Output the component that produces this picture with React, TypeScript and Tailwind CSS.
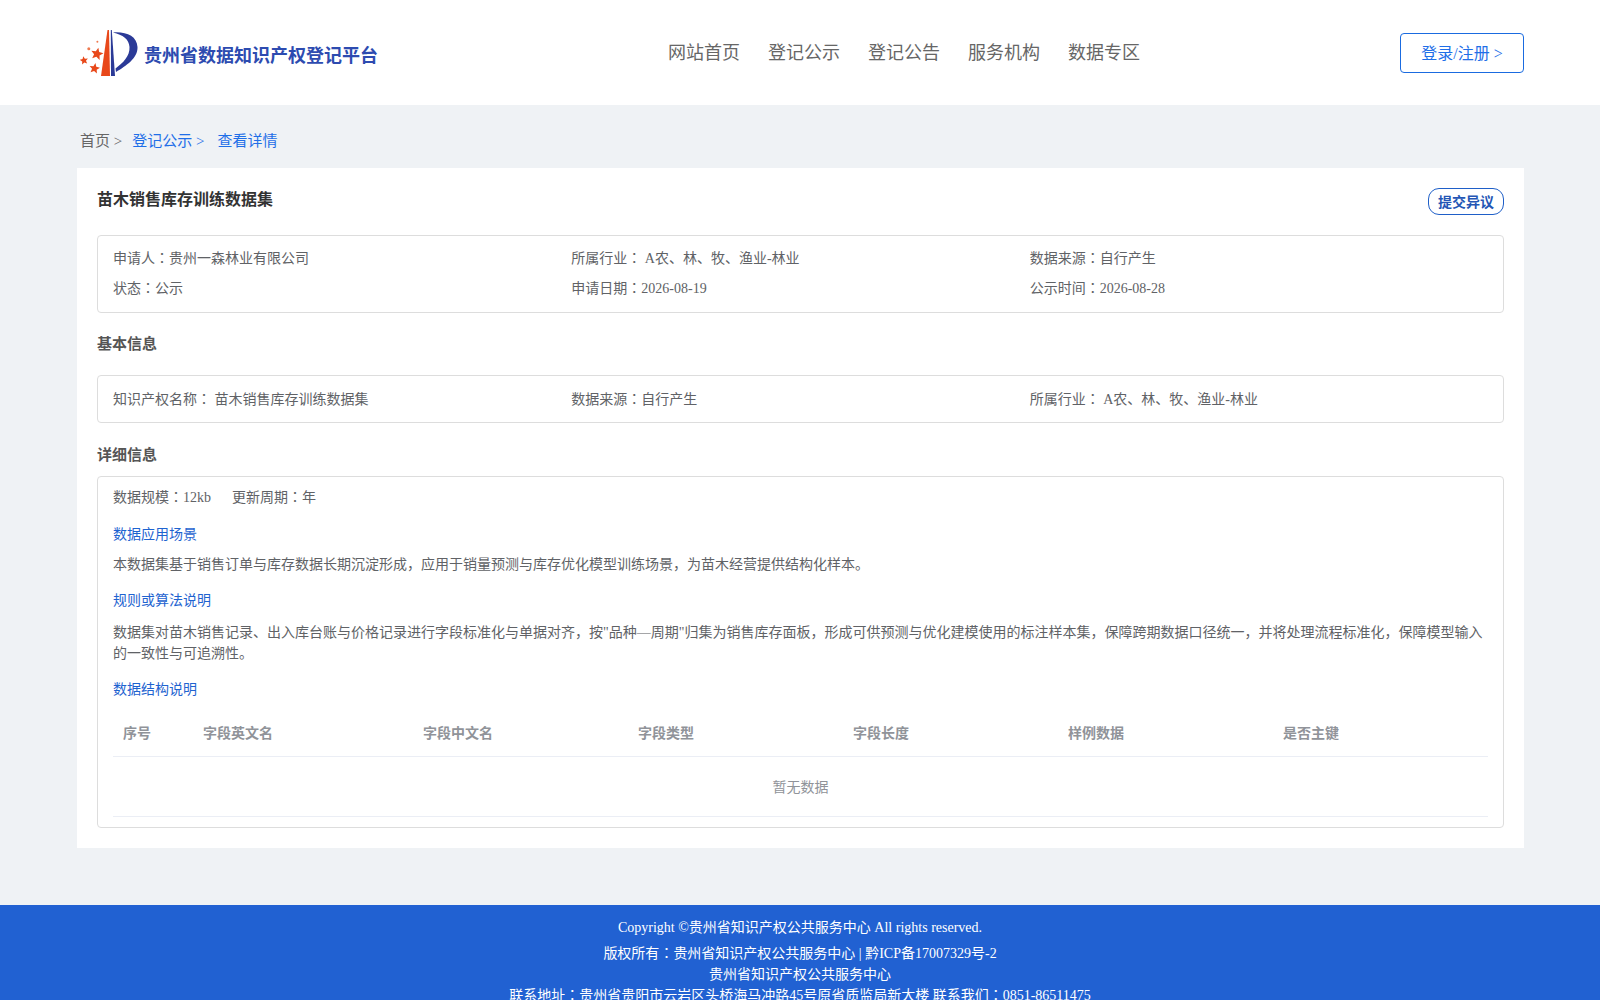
const nav = ["网站首页", "登记公示", "登记公告", "服务机构", "数据专区"];
const columns = [
  { label: "序号", width: "w-[80px]" },
  { label: "字段英文名", width: "w-[220px]" },
  { label: "字段中文名", width: "w-[215px]" },
  { label: "字段类型", width: "w-[215px]" },
  { label: "字段长度", width: "w-[215px]" },
  { label: "样例数据", width: "w-[215px]" },
  { label: "是否主键", width: "w-[215px]" },
];

function Star({ cx, cy, r, rotate = 0 }: { cx: number; cy: number; r: number; rotate?: number }) {
  const points = Array.from({ length: 10 }, (_, i) => {
    const radius = i % 2 === 0 ? r : r * 0.45;
    const angle = ((i * 36 - 90 + rotate) * Math.PI) / 180;
    return `${cx + radius * Math.cos(angle)},${cy + radius * Math.sin(angle)}`;
  }).join(" ");
  return <polygon points={points} fill="#e8481a" />;
}

function Logo() {
  return (
    <svg width="60" height="52" viewBox="0 0 60 52" aria-hidden className="shrink-0">
      <path d="M27.5 3 L29 3 L30 49 L21 49 Z" fill="#e8481a" />
      <path d="M30.8 3 L31.8 3 L35 49 L31 49 Z" fill="#2b3a97" />
      <path d="M33 5.5 C46 4.5 57 9 57.5 20 C58 31 46 39 36 45 L35.5 41.5 C43 36 50 29 49.5 20 C49 12 43 8 33 5.5 Z" fill="#2b3a97" />
      <Star cx={17} cy={27} r={6.5} rotate={12} />
      <Star cx={4} cy={33.5} r={4.4} rotate={-10} />
      <Star cx={14.5} cy={41.5} r={5.5} rotate={10} />
      <circle cx="8.8" cy="21.8" r="1.5" fill="#ee7a50" />
      <circle cx="17.4" cy="14.8" r="1" fill="#ee7a50" />
    </svg>
  );
}

// centred full-width colon, zero line height so the fallback font doesn't grow the line
function Colon() {
  return <span className="font-['Noto_Sans_CJK_TC',sans-serif] leading-[0]">：</span>;
}

function Heading({ children }: { children: React.ReactNode }) {
  return <div className="text-[15px] leading-5 font-bold text-[#555]">{children}</div>;
}

function Link({ children }: { children: React.ReactNode }) {
  return <div className="leading-5 text-[#1e63d0]">{children}</div>;
}

export default function App() {
  return (
    <div className="flex h-screen flex-col overflow-hidden bg-[#eff2f5] font-['Liberation_Serif','Noto_Sans_CJK_SC',serif] text-[14px] text-[#606266]">
      <header className="grid h-[105px] shrink-0 grid-cols-[588px_1fr_124px] items-center bg-white pr-[76px] pl-[80px]">
        <div className="flex items-center gap-1">
          <Logo />
          <span className="mt-[8px] text-[18px] font-bold text-[#2d4bb0]">贵州省数据知识产权登记平台</span>
        </div>
        <nav className="mt-[2px] flex gap-7 text-[18px] text-[#666]">
          {nav.map((item) => (
            <a key={item}>{item}</a>
          ))}
        </nav>
        <button className="h-10 rounded border border-[#1a6be0] pt-[3px] text-[16px] text-[#1f6fe8]">登录/注册 &gt;</button>
      </header>

      <div className="flex h-[63px] shrink-0 items-center pt-[10px] pl-[80px] text-[15px]">
        <span className="text-[#666]">首页 &gt;</span>
        <span className="ml-[10px] text-[#1f6fe8]">登记公示 &gt;</span>
        <span className="ml-[13px] text-[#1f6fe8]">查看详情</span>
      </div>

      <main className="mr-[76px] ml-[77px] h-[680px] shrink-0 bg-white px-5 pt-5">
        <div className="flex h-[47px] items-start justify-between">
          <h1 className="text-[16px] leading-6 font-bold text-[#333]">苗木销售库存训练数据集</h1>
          <button className="h-[27px] w-[76px] rounded-[11px] border border-[#1f5fc8] pt-[1px] text-[14px] font-bold text-[#2456b5]">提交异议</button>
        </div>

        <section className="grid h-[78px] grid-cols-3 content-center rounded border border-[#ddd] px-[15px] leading-[30px]">
          <div>申请人<Colon />贵州一森林业有限公司</div>
          <div>所属行业<Colon /> A农、林、牧、渔业-林业</div>
          <div>数据来源<Colon />自行产生</div>
          <div>状态<Colon />公示</div>
          <div>申请日期<Colon />2026-08-19</div>
          <div>公示时间<Colon />2026-08-28</div>
        </section>

        <div className="flex h-[62px] items-center">
          <Heading>基本信息</Heading>
        </div>

        <section className="grid h-[48px] grid-cols-3 items-center rounded border border-[#ddd] px-[15px]">
          <div>知识产权名称<Colon /> 苗木销售库存训练数据集</div>
          <div>数据来源<Colon />自行产生</div>
          <div>所属行业<Colon /> A农、林、牧、渔业-林业</div>
        </section>

        <div className="flex h-[53px] items-center pt-[10px]">
          <Heading>详细信息</Heading>
        </div>

        <section className="flex h-[352px] flex-col rounded border border-[#ddd] px-[15px] pt-[11px]">
          <div className="flex gap-[21px] leading-5">
            <span>数据规模<Colon />12kb</span>
            <span>更新周期<Colon />年</span>
          </div>
          <div className="mt-[17px]">
            <Link>数据应用场景</Link>
          </div>
          <p className="mt-[10px] leading-5">本数据集基于销售订单与库存数据长期沉淀形成，应用于销量预测与库存优化模型训练场景，为苗木经营提供结构化样本。</p>
          <div className="mt-[16px]">
            <Link>规则或算法说明</Link>
          </div>
          <p className="mt-[11px] leading-[21px]">
            数据集对苗木销售记录、出入库台账与价格记录进行字段标准化与单据对齐，按"品种—周期"归集为销售库存面板，形成可供预测与优化建模使用的标注样本集，保障跨期数据口径统一，并将处理流程标准化，保障模型输入的一致性与可追溯性。
          </p>
          <div className="mt-[16px]">
            <Link>数据结构说明</Link>
          </div>
          <div className="mt-[10px] flex h-[47px] items-center border-b border-[#ebeef5] pt-[1px] font-bold text-[#909399]">
            {columns.map((col) => (
              <div key={col.label} className={`${col.width} px-[10px]`}>
                {col.label}
              </div>
            ))}
          </div>
          <div className="flex h-[60px] items-center justify-center border-b border-[#ebeef5] pt-[1px] text-[#909399]">暂无数据</div>
        </section>
      </main>

      <footer className="mt-[57px] shrink-0 bg-[#2161d2] pt-[13px] text-center text-white">
        <div className="leading-5">Copyright ©贵州省知识产权公共服务中心 All rights reserved.</div>
        <div className="mt-[5px] leading-[21px]">
          <div>版权所有<Colon />贵州省知识产权公共服务中心 | 黔ICP备17007329号-2</div>
          <div>贵州省知识产权公共服务中心</div>
          <div>联系地址<Colon />贵州省贵阳市云岩区头桥海马冲路45号原省质监局新大楼 联系我们<Colon />0851-86511475</div>
        </div>
      </footer>
    </div>
  );
}
